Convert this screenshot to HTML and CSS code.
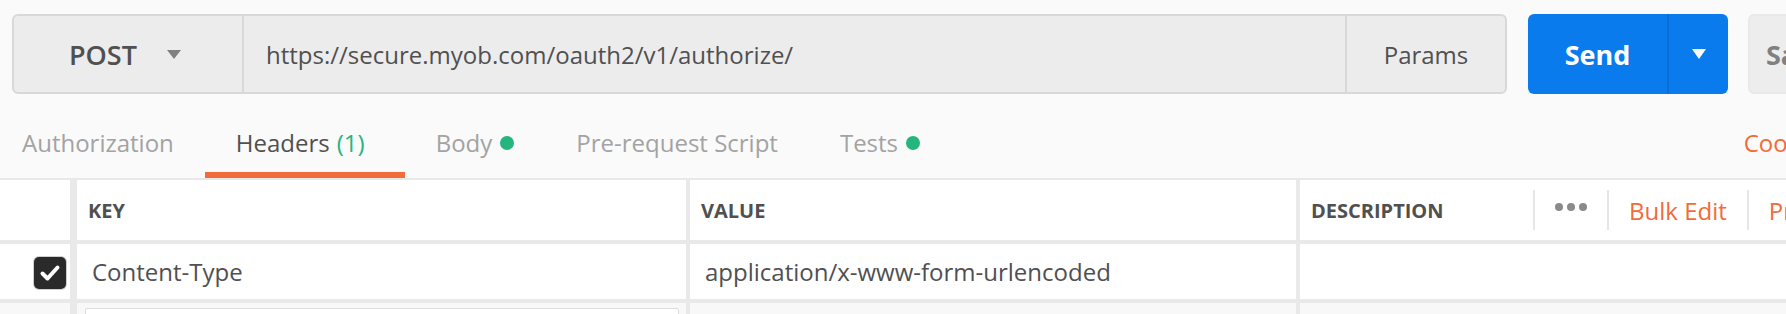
FILE: index.html
```html
<!DOCTYPE html>
<html lang="en">
<head>
    <meta charset="UTF-8">
    <title>Request</title>
    <link rel="stylesheet" href="styles.css">
</head>
<body>

<div class="request">

    <!-- URL bar -->
    <div class="url-row">
        <div class="url-group">
            <div class="method">POST <span class="caret"></span></div>
            <div class="url">https://secure.myob.com/oauth2/v1/authorize/</div>
            <div class="params">Params</div>
        </div>
        <div class="btn-send">
            <span class="send-label">Send</span>
            <span class="send-more"><span class="caret caret-white"></span></span>
        </div>
        <div class="btn-save">Save</div>
    </div>

    <!-- Tabs -->
    <div class="tabs">
        <div class="tab">Authorization</div>
        <div class="tab active">Headers <span class="count">(1)</span></div>
        <div class="tab">Body <span class="dot"></span></div>
        <div class="tab">Pre-request Script</div>
        <div class="tab">Tests <span class="dot"></span></div>
        <div class="tab-links">
            <span>Cookies</span>
            <span>Code</span>
        </div>
    </div>

    <!-- Headers table -->
    <div class="kv-table">
        <div class="cell cell-check"></div>
        <div class="cell head">KEY</div>
        <div class="cell head">VALUE</div>
        <div class="cell head desc-head">
            <span class="desc-label">DESCRIPTION</span>
            <span class="act act-dots"><i></i><i></i><i></i></span>
            <span class="act act-link">Bulk Edit</span>
            <span class="act act-link">Presets</span>
        </div>

        <div class="cell cell-check">
            <span class="checkbox">
                <svg width="32" height="32" viewBox="0 0 32 32">
                    <polyline points="8.5,16.5 13.5,21.5 23.5,10.5" fill="none" stroke="#fff" stroke-width="4" stroke-linecap="round" stroke-linejoin="round"/>
                </svg>
            </span>
        </div>
        <div class="cell">Content-Type</div>
        <div class="cell">application/x-www-form-urlencoded</div>
        <div class="cell"></div>

        <div class="cell cell-check empty"></div>
        <div class="cell empty"><div class="key-input"></div></div>
        <div class="cell empty"></div>
        <div class="cell empty"></div>
    </div>

</div>

</body>
</html>
```

FILE: styles.css
```css
body {
    margin: 0;
    background: #fafafa;
    font-family: 'Open Sans', sans-serif;
    color: #505050;
    overflow: hidden;
}

.request {
    width: 1951px;
    height: 314px;
    overflow: hidden;
}

/* URL bar */
.url-row {
    display: flex;
    padding: 14px 0 0 12px;
}

.url-group {
    display: flex;
    width: 1495px;
    height: 80px;
    box-sizing: border-box;
    border: 2px solid #d8d8d8;
    border-radius: 6px;
    background: #ececec;
    font-size: 24px;
}

.method {
    width: 230px;
    border-right: 2px solid #d8d8d8;
    display: flex;
    align-items: center;
    padding-left: 55px;
    box-sizing: border-box;
    font-size: 27px;
    font-weight: 600;
}

.caret {
    display: inline-block;
    margin-left: 30px;
    width: 0;
    height: 0;
    border-left: 7.5px solid transparent;
    border-right: 7.5px solid transparent;
    border-top: 9px solid #808080;
}

.caret-white {
    margin-left: 0;
    border-top-color: #fff;
    border-top-width: 10px;
}

.url {
    flex: 1;
    display: flex;
    align-items: center;
    padding-left: 22px;
}

.params {
    width: 160px;
    border-left: 2px solid #d8d8d8;
    box-sizing: border-box;
    display: flex;
    align-items: center;
    justify-content: center;
}

.btn-send {
    display: flex;
    margin-left: 21px;
    width: 200px;
    height: 80px;
    border-radius: 6px;
    background: #097bed;
    color: #fff;
    font-size: 27px;
    font-weight: 700;
}

.send-label {
    width: 139px;
    display: flex;
    align-items: center;
    justify-content: center;
}

.send-more {
    flex: 1;
    border-left: 2px solid #0a6ed6;
    display: flex;
    align-items: center;
    justify-content: center;
}

.btn-save {
    margin-left: 20px;
    width: 170px;
    height: 80px;
    box-sizing: border-box;
    border: 2px solid #e9e9e9;
    border-radius: 6px;
    background: #ededed;
    color: #808080;
    font-size: 27px;
    font-weight: 700;
    display: flex;
    align-items: center;
    padding-left: 16px;
}

/* Tabs */
.tabs {
    display: flex;
    margin-left: -9px;
    border-bottom: 2px solid #e8e8e8;
    font-size: 24px;
}

.tab {
    padding: 32px 31px 13px;
    line-height: 33px;
    color: #a3a3a3;
    border-bottom: 6px solid transparent;
    display: flex;
    align-items: center;
    white-space: nowrap;
}

.tab.active {
    color: #505050;
    border-bottom-color: #f26b3a;
    padding-right: 40px;
}

.count {
    color: #26b47f;
    margin-left: 7px;
}

.dot {
    display: inline-block;
    width: 14px;
    height: 14px;
    border-radius: 50%;
    background: #26b47f;
    margin-left: 8px;
}

.tab-links {
    margin-left: auto;
    display: flex;
    gap: 40px;
    padding: 32px 22px 19px 0;
    line-height: 33px;
    color: #f26b3a;
}

/* Table */
.kv-table {
    display: grid;
    grid-template-columns: 73px 609px 606px 1fr;
    grid-template-rows: 60px 55px 40px;
    gap: 4px;
    background: #e9e9e9;
    font-size: 24px;
}

.cell {
    background: #fff;
    display: flex;
    align-items: center;
    padding-left: 15px;
    white-space: nowrap;
}

.cell.head {
    font-size: 20px;
    font-weight: 700;
    padding-left: 11px;
}

.cell-check {
    border-right: 3px solid #e9e9e9;
    justify-content: flex-end;
    padding: 0 4px 0 0;
}

.checkbox {
    width: 32px;
    height: 32px;
    border-radius: 5px;
    background: #2a2a2a;
    box-shadow: 0 0 0 1px #cfcfcf;
    display: flex;
    margin-top: 3px;
}

.cell.empty {
    background: #f8f8f8;
    align-items: flex-start;
    padding: 5px 7px 0 8px;
}

.cell-check.empty {
    padding: 0;
}

.key-input {
    flex: 1;
    height: 40px;
    background: #fff;
    border: 1px solid #dcdcdc;
    border-radius: 2px;
}

.desc-label {
    width: 222px;
}

.act {
    height: 40px;
    border-left: 2px solid #e6e6e6;
    padding: 0 20px;
    display: flex;
    align-items: center;
}

.act-dots {
    gap: 4px;
    padding-top: 1px;
    align-items: flex-start;
    height: 39px;
}

.act-dots i {
    width: 8px;
    height: 8px;
    border-radius: 50%;
    background: #8a8a8a;
    margin-top: 12px;
}

.act-link {
    color: #f26b3a;
    font-size: 24px;
    font-weight: 400;
}
```
